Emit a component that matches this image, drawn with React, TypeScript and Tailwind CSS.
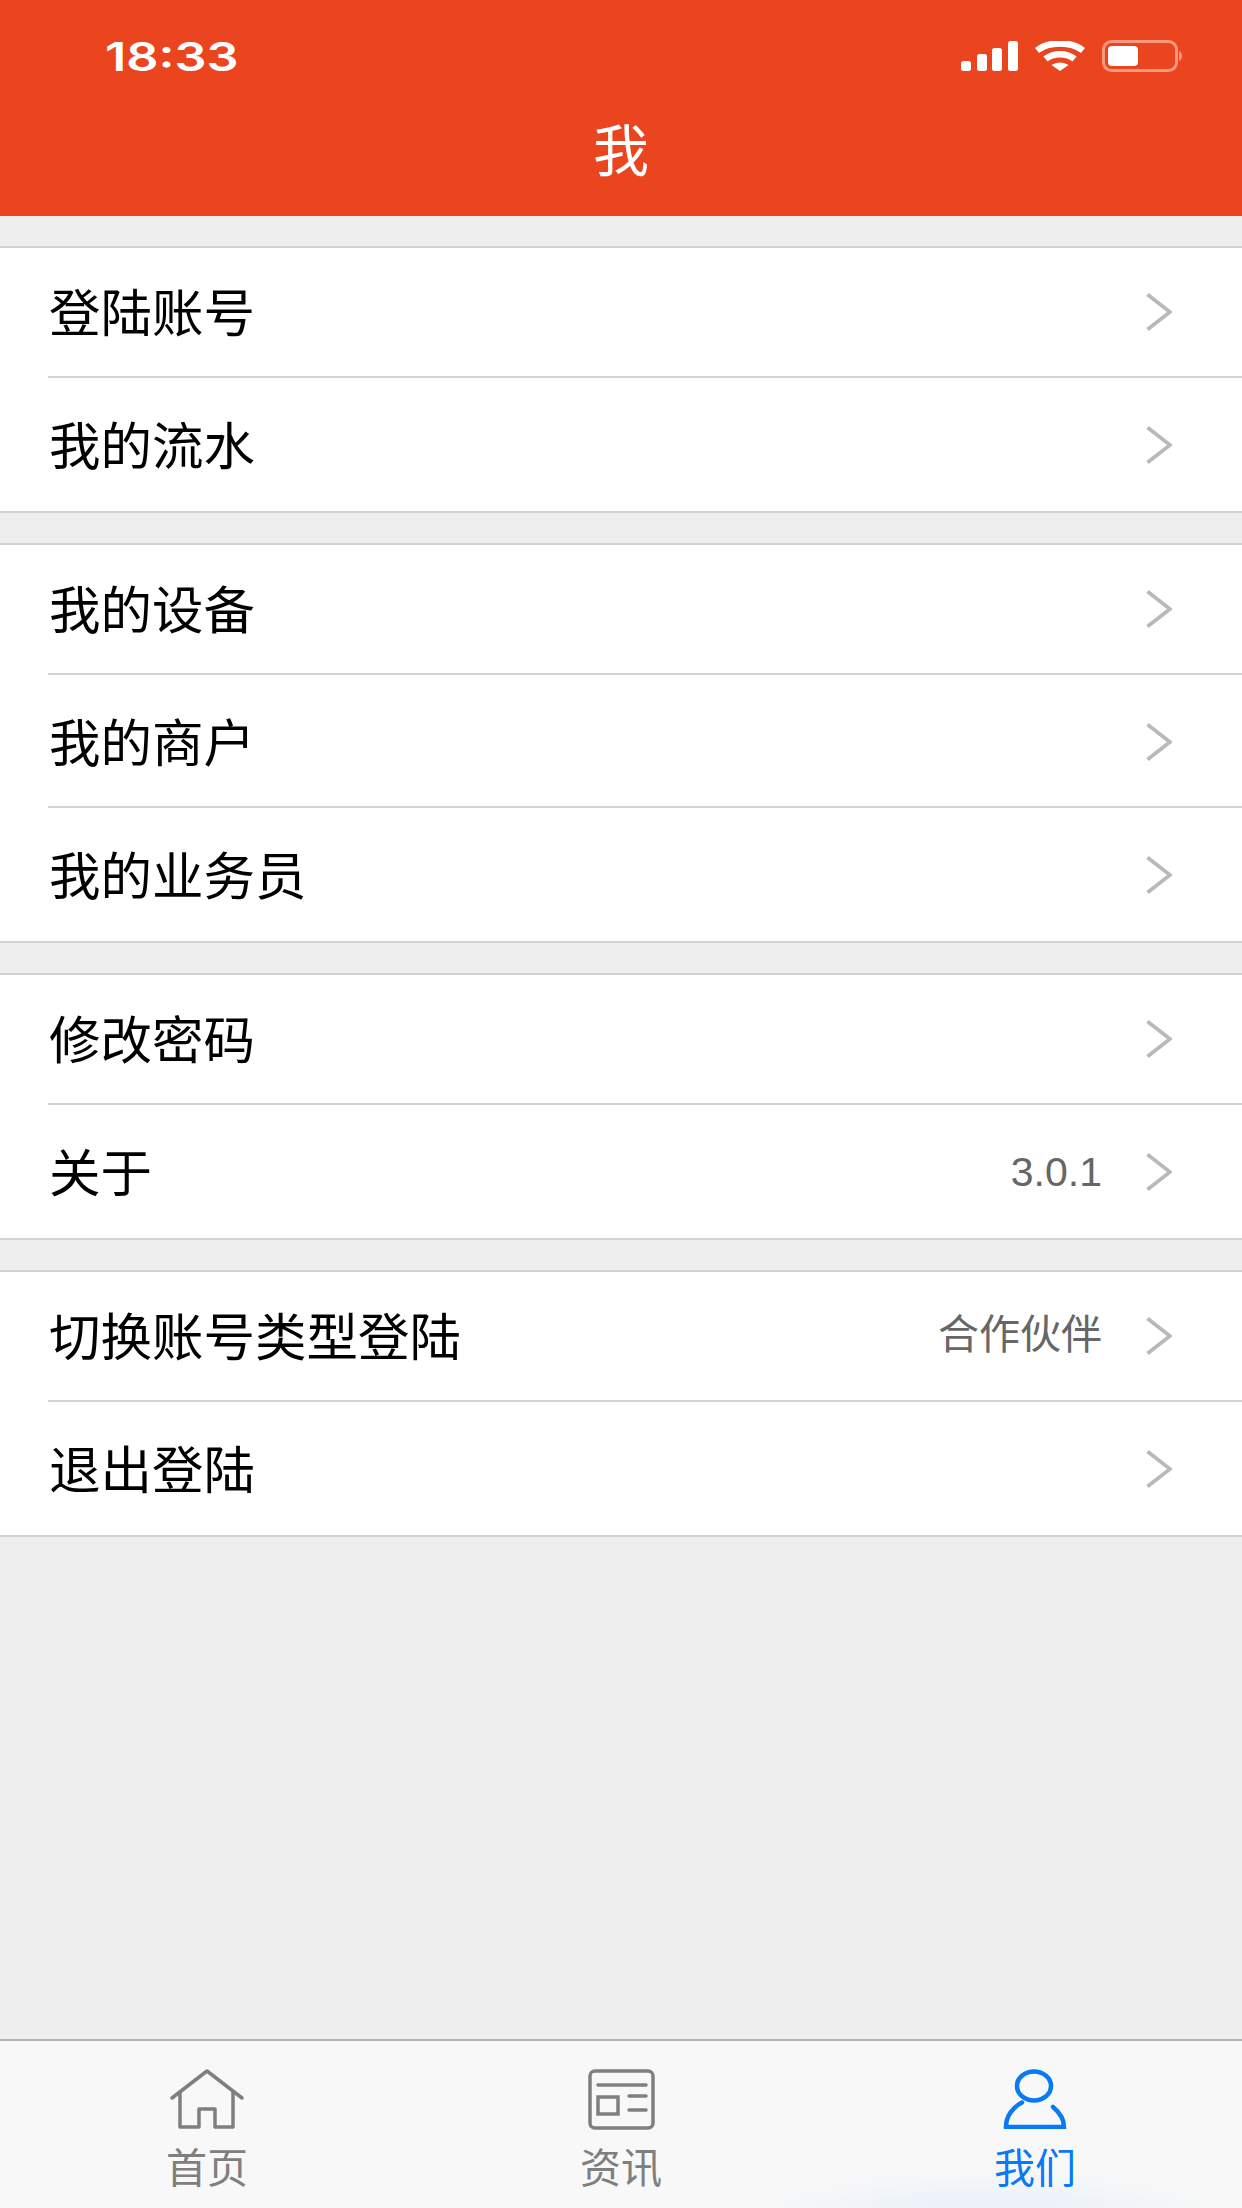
const CJK = "font-['Liberation_Sans','Noto_Sans_CJK_SC',sans-serif]";

function Chevron({ first }: { first?: boolean }) {
  return (
    <svg width="26" height="38" viewBox="0 0 26 38" fill="none" className={`shrink-0 ${first ? "mb-[3px]" : ""}`}>
      <path d="M1.500 1.500 L24 19 L1.500 36.500" stroke="#b9b9b9" strokeWidth="3.800" />
    </svg>
  );
}

function Row({ label, value, divider, first }: { label: string; value?: string; divider?: boolean; first?: boolean }) {
  return (
    <div className={`relative flex items-center bg-white pl-[49px] pr-[70px] ${first ? "h-[130px]" : "h-[133px]"}`}>
      <span className={`flex-1 text-[51.500px] leading-none text-black ${first ? "pt-[3px]" : "pt-[7px]"}`}>{label}</span>
      {value && (
        <span className={`mr-[44px] text-[41px] leading-none text-[#666666] ${first ? "mb-[3px]" : "pt-[2px]"}`}>{value}</span>
      )}
      <Chevron first={first} />
      {divider && <div className="absolute bottom-0 left-[48px] right-0 h-[2px] bg-[#d2d2d2]" />}
    </div>
  );
}

function Section({ rows }: { rows: { label: string; value?: string }[] }) {
  return (
    <div className="border-y-2 border-[#d2d2d2] bg-white">
      {rows.map((r, i) => (
        <Row key={r.label} label={r.label} value={r.value} first={i === 0} divider={i < rows.length - 1} />
      ))}
    </div>
  );
}

function StatusIcons() {
  return (
    <div className="flex items-center">
      <svg width="57" height="30" viewBox="0 0 57 30" fill="white">
        <rect x="0" y="20" width="10" height="10" rx="2.500" />
        <rect x="16" y="13" width="10" height="17" rx="2.500" />
        <rect x="31" y="7" width="10" height="23" rx="2.500" />
        <rect x="47" y="0" width="10" height="30" rx="2.500" />
      </svg>
      <svg width="50" height="30" viewBox="0 0 50 30" className="ml-[17px]" fill="none" stroke="white" strokeWidth="6.500">
        <path d="M2 9.500 C14 0 36 0 48 9.500" />
        <path d="M10.500 18 C18 11.500 32 11.500 39.500 18" />
        <path d="M16.500 24 L25 30 L33.500 24 C28 20.500 22 20.500 16.500 24 Z" fill="white" stroke="none" />
      </svg>
      <svg width="81" height="32" viewBox="0 0 81 32" className="ml-[17px]" fill="none">
        <rect x="1.500" y="1.500" width="73" height="29" rx="8" stroke="#f6977e" strokeWidth="3" />
        <rect x="6" y="6" width="30" height="20" rx="4" fill="white" />
        <path d="M77 11 C81 12 81 20 77 21 Z" fill="#f6977e" />
      </svg>
    </div>
  );
}

function Tab({ label, active, children }: { label: string; active?: boolean; children: React.ReactNode }) {
  return (
    <div className="relative flex w-[414px] flex-col items-center pt-[28px]">
      <div className="flex h-[60px] items-center justify-center">{children}</div>
      <span className={`mt-[20px] text-[41px] leading-[40px] ${active ? "text-[#0a79f5]" : "text-[#7f7f7f]"}`}>{label}</span>
    </div>
  );
}

export default function App() {
  return (
    <div className={`${CJK} flex h-[2208px] w-[1242px] flex-col overflow-hidden bg-[#eeeeee]`}>
      <header className="h-[216px] shrink-0 bg-[#ea451f] text-white">
        <div className="flex h-[112px] items-center justify-between pl-[105px] pr-[59px]">
          <span className="origin-left scale-x-[1.29] font-['Inter',sans-serif] text-[39px] font-semibold leading-none">18:33</span>
          <StatusIcons />
        </div>
        <div className="mt-[12px] text-center text-[56px] leading-[56px]">我</div>
      </header>

      <main className="flex flex-1 flex-col gap-[30px] pt-[30px]">
        <Section rows={[{ label: "登陆账号" }, { label: "我的流水" }]} />
        <Section rows={[{ label: "我的设备" }, { label: "我的商户" }, { label: "我的业务员" }]} />
        <Section rows={[{ label: "修改密码" }, { label: "关于", value: "3.0.1" }]} />
        <Section rows={[{ label: "切换账号类型登陆", value: "合作伙伴" }, { label: "退出登陆" }]} />
      </main>

      <nav className="relative flex h-[169px] shrink-0 overflow-hidden border-t-2 border-[#b4b4b4] bg-[#f8f8f8]">
        <div className="absolute -bottom-[70px] left-[740px] h-[110px] w-[500px] bg-[radial-gradient(closest-side,#e6f0fa_0%,#eef3f9_50%,#f8f8f8_100%)]" />
        <Tab label="首页">
          <svg width="74" height="60" viewBox="0 0 74 60" fill="none" stroke="#7f7f7f" strokeWidth="3.500" strokeLinecap="round" strokeLinejoin="round">
            <path d="M2 29 L37 2 L72 29" />
            <path d="M10 23 V58 H29 V40 H45 V58 H63 V23" />
          </svg>
        </Tab>
        <Tab label="资讯">
          <svg width="67" height="61" viewBox="0 0 67 61" fill="none" stroke="#7f7f7f" strokeWidth="3.500" strokeLinecap="round">
            <rect x="2" y="2" width="63" height="57" rx="5" />
            <path d="M10 16 H58" />
            <rect x="10" y="28" width="20" height="17" />
            <path d="M41 27 H58 M41 41 H58" />
          </svg>
        </Tab>
        <Tab label="我们" active>
          <svg width="64" height="60" viewBox="0 0 64 60" fill="none" stroke="#0a79f5" strokeWidth="4.500" strokeLinecap="round">
            <ellipse cx="31" cy="17" rx="17" ry="14.500" />
            <path d="M19 33.500 C10 38 3 47 3 58 H61 C61 50 56 43 50 38" />
          </svg>
        </Tab>
      </nav>
    </div>
  );
}
